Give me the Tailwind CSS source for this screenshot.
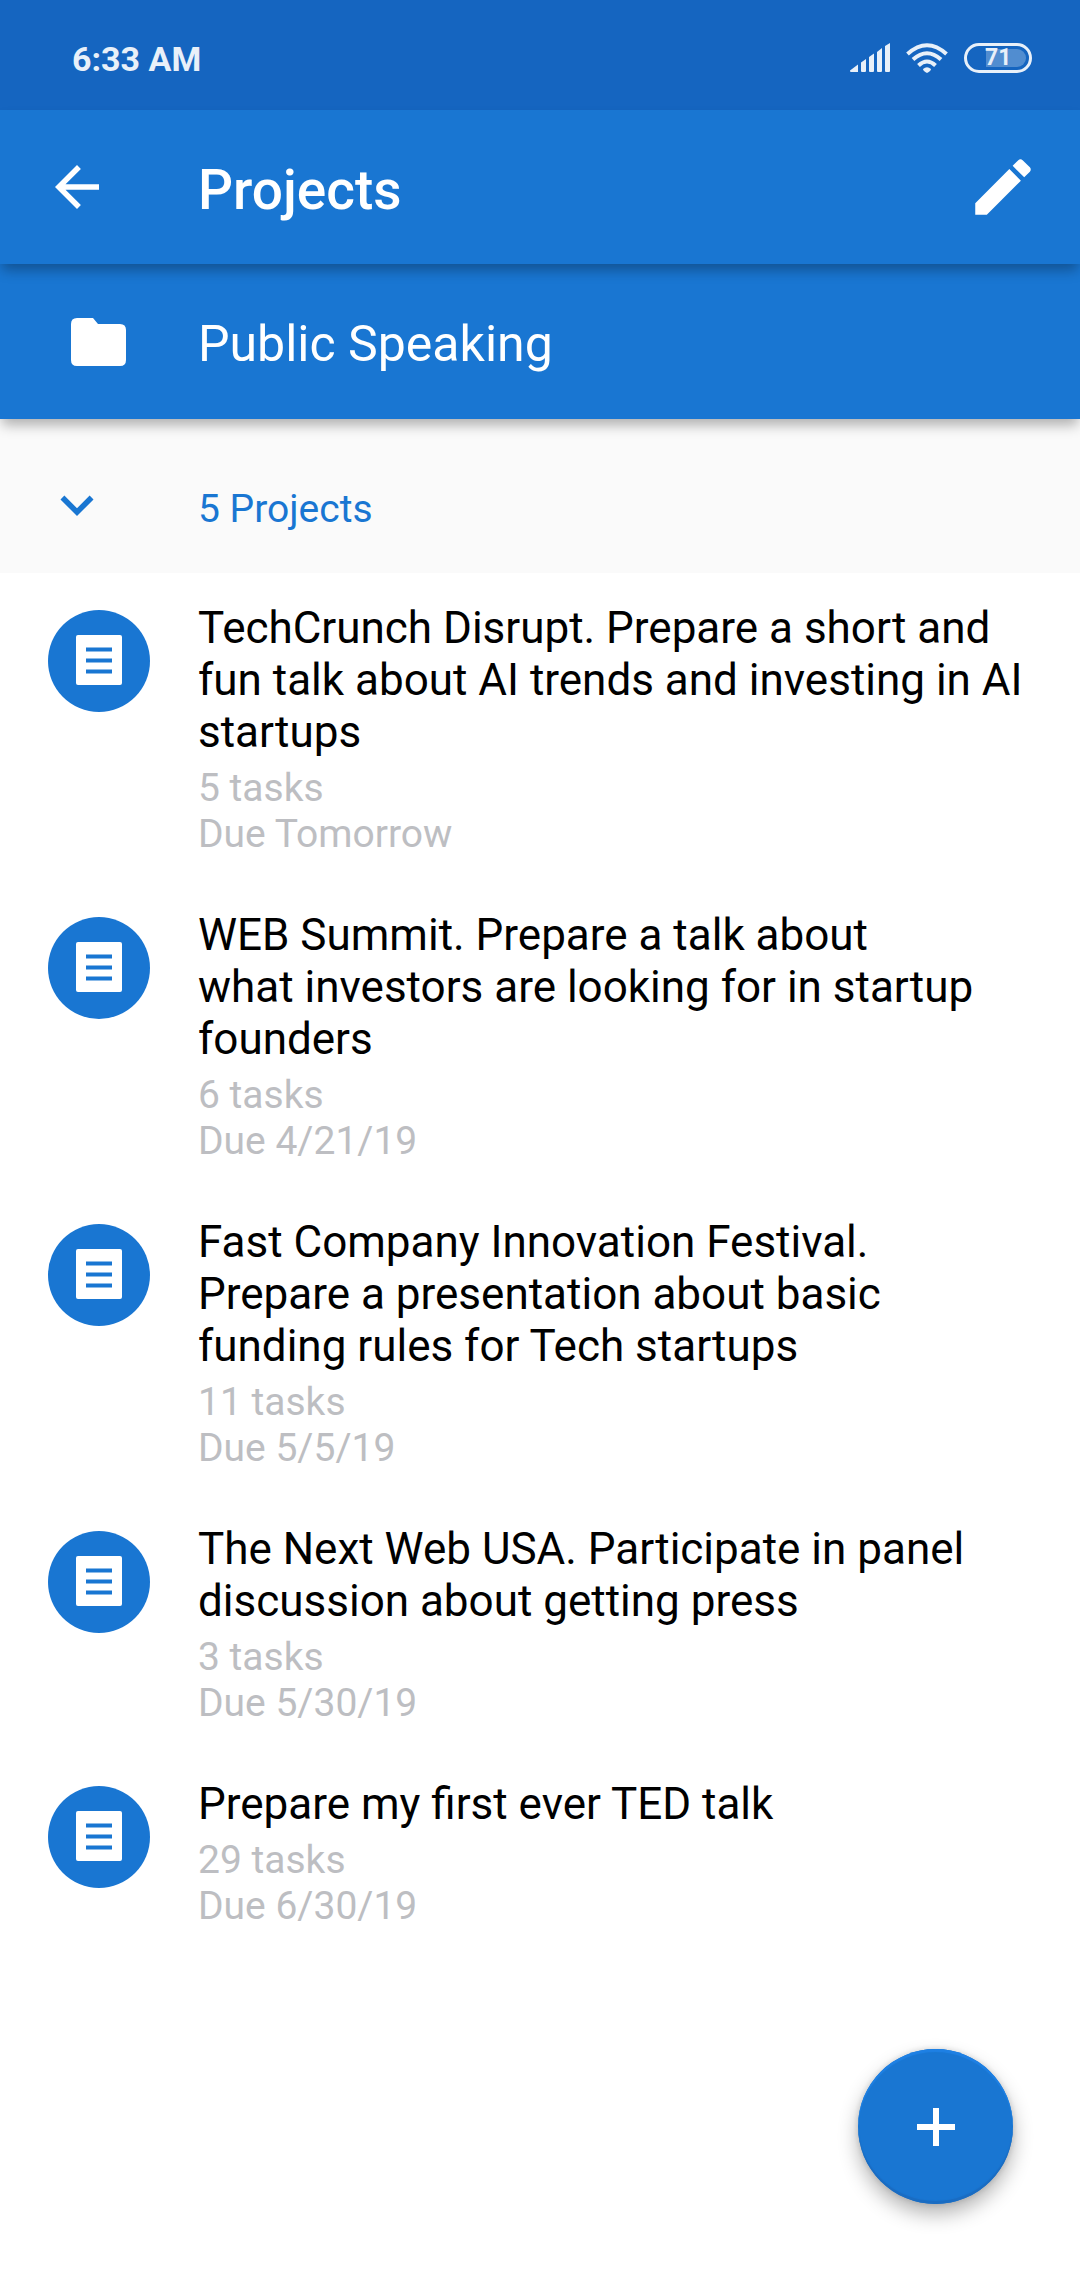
<!DOCTYPE html>
<html lang="en">
<head>
<meta charset="utf-8">
<meta name="viewport" content="width=device-width, initial-scale=1">
<title>Projects</title>
<script src="https://cdn.jsdelivr.net/npm/@tailwindcss/browser@4"></script>
</head>
<body class="min-h-screen bg-white font-['Roboto',sans-serif] text-black">

<svg class="hidden" aria-hidden="true">
  <symbol id="project" viewBox="0 0 102 102">
    <circle cx="51" cy="51" r="51" fill="#1976d2"/>
    <rect x="28" y="25" width="46" height="50" rx="2" fill="#fff"/>
    <path d="M38 39.5h26M38 50.5h26M38 61.5h26" stroke="#1976d2" stroke-width="4"/>
  </symbol>
</svg>

<!-- Status bar -->
<div class="flex h-[110px] items-center bg-[#1565c0] pt-1.5 pr-12 pl-[72px] text-[#e8f0f9]">
  <span class="grow pt-0.5 text-[34px] leading-10 font-bold">6:33 AM</span>
  <div class="flex items-center gap-4">
    <svg class="h-[30px] w-10" viewBox="0 0 40 30" fill="currentColor" role="img" aria-label="Signal">
      <path d="M0 27.5 8 21.500V29H1Q0 29 0 28ZM11 19.500 16 16V28Q16 29 15 29H12Q11 29 11 28ZM19 14 24 10.500V28Q24 29 23 29H20Q19 29 19 28ZM27 9 32 5V28Q32 29 31 29H28Q27 29 27 28ZM35 3 40 0V28Q40 29 39 29H36Q35 29 35 28Z"/>
    </svg>
    <svg class="h-[30px] w-[42px]" viewBox="0 0 42 30" fill="none" stroke="currentColor" stroke-width="4" role="img" aria-label="Wi-Fi">
      <path d="M1.500 11Q21 -6.500 40.500 11M7 16.500Q21 4 35 16.500M12.500 22.500Q21 14.500 29.500 22.500"/>
      <path d="M17 26Q21 22.500 25 26Q25 28 21 30Q17 28 17 26Z" fill="currentColor" stroke="none"/>
    </svg>
    <div class="flex h-[30px] w-[68px] items-center justify-center rounded-full border-3 border-current p-[3px]">
      <div class="flex h-[18px] w-full items-center rounded-full bg-linear-to-r from-transparent from-29% to-[#518dd0] to-29% pl-[15px] text-[23px] leading-[18px] font-bold">71</div>
    </div>
  </div>
</div>

<!-- App bar -->
<header class="relative z-20 flex h-[154px] items-center bg-[#1976d2] pr-10 pl-11 text-white shadow-[0_8px_12px_-2px_rgba(0,0,0,0.3)]">
  <button type="button" aria-label="Back" class="mr-[88px]">
    <svg class="size-[66px]" viewBox="0 0 24 24" fill="currentColor"><path d="M20 11H7.830l5.590-5.590L12 4l-8 8 8 8 1.410-1.410L7.830 13H20v-2z"/></svg>
  </button>
  <h1 class="grow pt-1.5 text-[55px] leading-[64px] font-medium">Projects</h1>
  <button type="button" aria-label="Edit">
    <svg class="size-[74px]" viewBox="0 0 24 24" fill="currentColor"><path d="M3 17.250V21h3.750L17.810 9.940l-3.750-3.750L3 17.250zM20.710 7.040c.390-.390.390-1.020 0-1.410l-2.340-2.340c-.390-.390-1.020-.390-1.410 0l-1.830 1.830 3.750 3.750 1.830-1.830z"/></svg>
  </button>
</header>

<!-- Current folder -->
<div class="relative z-10 flex h-[155px] items-center gap-[72px] bg-[#1976d2] pl-[71px] text-white shadow-[0_8px_12px_-2px_rgba(0,0,0,0.3)]">
  <svg class="h-12 w-[55px]" viewBox="0 0 55 48" fill="currentColor" aria-hidden="true"><path d="M6 0H22L27 6H49Q55 6 55 12V42Q55 48 49 48H6Q0 48 0 42V6Q0 0 6 0Z"/></svg>
  <h2 class="pt-1 text-[50px] leading-[58px]">Public Speaking</h2>
</div>

<main>
  <button type="button" aria-expanded="true" class="flex h-[154px] w-full items-center gap-[88px] bg-[#fafafa] pt-[18px] pl-11 text-left text-[#1976d2]">
    <svg class="size-[66px]" viewBox="0 0 24 24" fill="currentColor" aria-hidden="true"><path d="M16.590 8.590L12 13.170 7.410 8.590 6 10l6 6 6-6z"/></svg>
    <span class="pt-2 text-[39px] leading-[46px]">5 Projects</span>
  </button>

  <ul>
    <li class="flex gap-12 pt-[29px] pr-12 pb-[23px] pl-12">
      <svg class="mt-2 size-[102px] shrink-0" aria-hidden="true"><use href="#project"/></svg>
      <div class="flex grow flex-col gap-[7px]">
        <h3 class="text-[44px] leading-[52px]">TechCrunch Disrupt. Prepare a short and fun talk about AI trends and investing in AI startups</h3>
        <p class="text-[39px] leading-[46px] text-[#bdbec2]">5 tasks<br>Due Tomorrow</p>
      </div>
    </li>
    <li class="flex gap-12 pt-[29px] pr-12 pb-[23px] pl-12">
      <svg class="mt-2 size-[102px] shrink-0" aria-hidden="true"><use href="#project"/></svg>
      <div class="flex grow flex-col gap-[7px]">
        <h3 class="text-[44px] leading-[52px]">WEB Summit. Prepare a talk about<br>what investors are looking for in startup founders</h3>
        <p class="text-[39px] leading-[46px] text-[#bdbec2]">6 tasks<br>Due 4/21/19</p>
      </div>
    </li>
    <li class="flex gap-12 pt-[29px] pr-12 pb-[23px] pl-12">
      <svg class="mt-2 size-[102px] shrink-0" aria-hidden="true"><use href="#project"/></svg>
      <div class="flex grow flex-col gap-[7px]">
        <h3 class="text-[44px] leading-[52px]">Fast Company Innovation Festival.<br>Prepare a presentation about basic funding rules for Tech startups</h3>
        <p class="text-[39px] leading-[46px] text-[#bdbec2]">11 tasks<br>Due 5/5/19</p>
      </div>
    </li>
    <li class="flex gap-12 pt-[29px] pr-12 pb-[23px] pl-12">
      <svg class="mt-2 size-[102px] shrink-0" aria-hidden="true"><use href="#project"/></svg>
      <div class="flex grow flex-col gap-[7px]">
        <h3 class="text-[44px] leading-[52px]">The Next Web USA. Participate in panel discussion about getting press</h3>
        <p class="text-[39px] leading-[46px] text-[#bdbec2]">3 tasks<br>Due 5/30/19</p>
      </div>
    </li>
    <li class="flex gap-12 pt-[29px] pr-12 pb-[23px] pl-12">
      <svg class="mt-2 size-[102px] shrink-0" aria-hidden="true"><use href="#project"/></svg>
      <div class="flex grow flex-col gap-[7px]">
        <h3 class="text-[44px] leading-[52px]">Prepare my first ever TED talk</h3>
        <p class="text-[39px] leading-[46px] text-[#bdbec2]">29 tasks<br>Due 6/30/19</p>
      </div>
    </li>
  </ul>
</main>

<button type="button" aria-label="Add project" class="fixed right-[67px] bottom-[76px] flex size-[155px] items-center justify-center rounded-full bg-[#1976d2] text-white shadow-[0_10px_20px_rgba(0,0,0,0.3),0_0_6px_rgba(0,0,0,0.15),inset_0_3px_1px_#1e80e4,inset_0_-3px_1px_#1a6cc2]">
  <svg class="size-[38px]" viewBox="0 0 38 38" fill="currentColor"><path d="M16 0h6v16h16v6H22v16h-6V22H0v-6h16z"/></svg>
</button>

</body>
</html>
